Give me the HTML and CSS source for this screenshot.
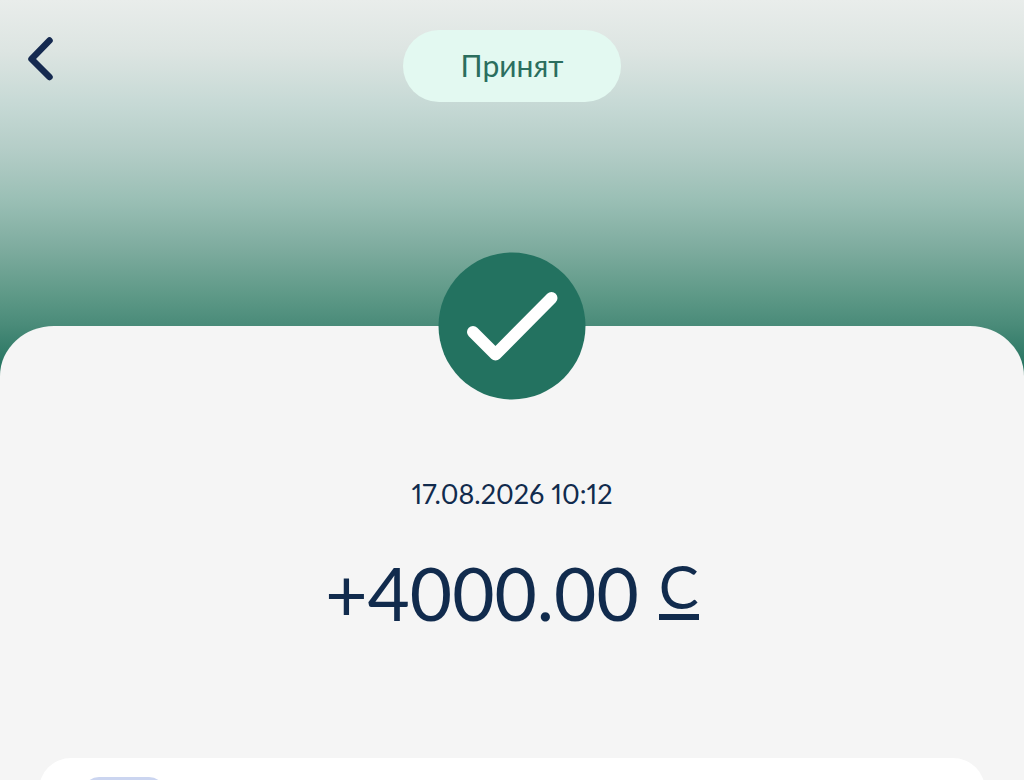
FILE: index.html
```html
<!DOCTYPE html>
<html lang="ru">

<head>
  <meta charset="UTF-8">
  <meta name="viewport" content="width=device-width, initial-scale=1.0">
  <title>Принят</title>

  <link rel="stylesheet" href="styles.css">
</head>

<body>
  <div class="screen">
    <header class="header">
      <button class="back" type="button" aria-label="Назад">
        <svg width="30" height="48" viewBox="0 0 30 48" fill="none" stroke="#152a50" stroke-width="6.500" stroke-linecap="round" stroke-linejoin="round">
          <path d="M24.500 5.500 L6.500 24 L24.500 42" />
        </svg>
      </button>
      <span class="status">Принят</span>
    </header>

    <main class="sheet">
      <div class="mark">
        <svg width="148" height="148" viewBox="0 0 148 148">
          <circle cx="74" cy="74" r="73.500" fill="#237260" />
          <path d="M35 80 L57.500 102.500 L113.500 46" fill="none" stroke="#fff" stroke-width="12" stroke-linecap="round" stroke-linejoin="round" />
        </svg>
      </div>

      <time class="date" datetime="2026-08-17T10:12">17.08.2026 10:12</time>
      <h1 class="amount">+4000.00 <span class="currency">С</span></h1>

      <section class="card">
        <div class="cardIcon"></div>
      </section>
    </main>
  </div>
</body>

</html>
```
FILE: styles.css
```css
* {
  box-sizing: border-box;
}

body {
  margin: 0;
  background-color: #f5f5f5;
  color: #112b4d;
  font-family: Lato, "Noto Sans", sans-serif;
}

.screen {
  height: 100vh;
  overflow: hidden;
  background: linear-gradient(#e9edeb 0, #dde5e2 50px, #c6d9d5 105px, #b4cdc7 150px, #9abfb5 200px, #7dab9e 250px, #5c9886 298px, #4a8b79 325px, #1f705c 375px);
}

.header {
  display: grid;
  grid-template-columns: 1fr auto 1fr;
  align-items: start;
  height: 326px;
  padding: 30px 25px 0;
}

.back {
  display: flex;
  justify-self: start;
  margin-top: 5px;
  padding: 0;
  border: 0;
  background: none;
  cursor: pointer;
}

.status {
  padding: 0 58px 2px;
  border-radius: 36px;
  background-color: #e3f9f1;
  color: #2b6e5e;
  font-size: 30px;
  line-height: 70px;
}

.sheet {
  display: flex;
  flex-direction: column;
  align-items: center;
  min-height: 100vh;
  border-radius: 54px 54px 0 0 / 50px 50px 0 0;
  background-color: #f5f5f5;
}

.mark {
  display: flex;
  margin-top: -74px;
}

.date {
  margin-top: 76px;
  font-size: 27px;
  line-height: 36px;
  font-variant-numeric: proportional-nums;
}

.amount {
  display: flex;
  align-items: flex-end;
  gap: 20px;
  margin: 36px 0 0;
  font-size: 73px;
  font-weight: 400;
  line-height: 90px;
}

.currency {
  height: 54px;
  margin-bottom: 18px;
  border-bottom: 6px solid #112b4d;
  font-size: 60px;
  line-height: 40px;
}

.card {
  align-self: stretch;
  min-height: 200px;
  margin: 120px 39px 0;
  padding: 19px 44px;
  border-radius: 32px;
  background-color: #fff;
}

.cardIcon {
  width: 82px;
  height: 82px;
  border-radius: 16px;
  background-color: #cbd5f0;
}
```
